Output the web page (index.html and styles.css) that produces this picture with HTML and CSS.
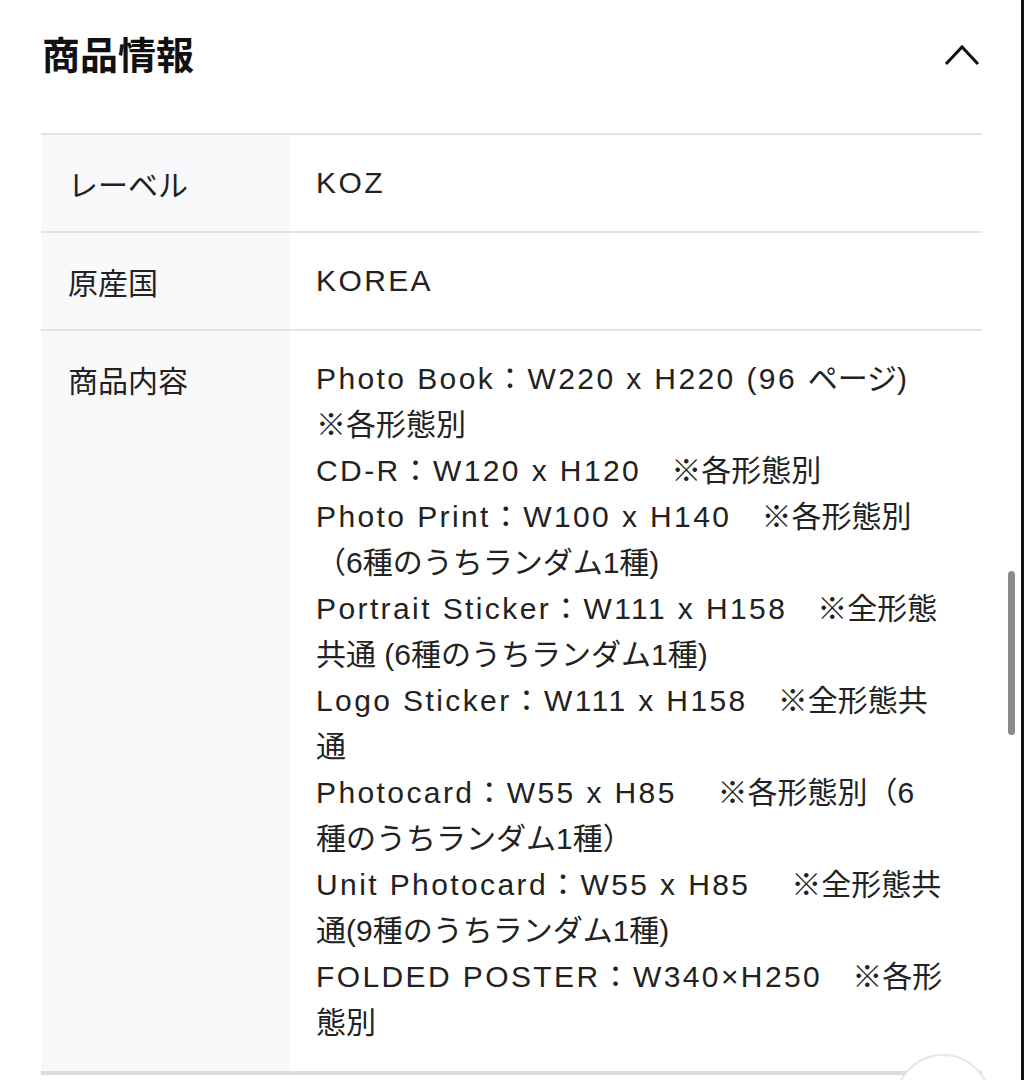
FILE: index.html
```html
<!DOCTYPE html>
<html lang="ja">
<head>
<meta charset="UTF-8">
<meta name="viewport" content="width=device-width, initial-scale=1.0">
<title>商品情報</title>
<link rel="stylesheet" href="styles.css">
</head>
<body>

<section class="info">
    <header class="info-head">
        <h2>商品情報</h2>
        <button class="toggle" aria-label="閉じる">
            <svg width="36" height="26" viewBox="0 0 36 26">
                <polyline points="2,24 18,7 34,24" fill="none" stroke="#111" stroke-width="3"/>
            </svg>
        </button>
    </header>

    <table class="spec">
        <tr>
            <th>レーベル</th>
            <td>KOZ</td>
        </tr>
        <tr>
            <th>原産国</th>
            <td>KOREA</td>
        </tr>
        <tr>
            <th>商品内容</th>
            <td>
                <p>Photo Book：W220 x H220 (96 <span class="ja">ページ</span>)<br><span class="ja">※各形態別</span></p>
                <p>CD-R：W120 x H120<span class="ja">　※各形態別</span></p>
                <p>Photo Print：W100 x H140<span class="ja">　※各形態別<br>（6種のうちランダム1種)</span></p>
                <p>Portrait Sticker：W111 x H158<span class="ja">　※全形態<br>共通 (6種のうちランダム1種)</span></p>
                <p>Logo Sticker：W111 x H158<span class="ja">　※全形態共<br>通</span></p>
                <p>Photocard：W55 x H85 <span class="ja">　※各形態別（6<br>種のうちランダム1種）</span></p>
                <p>Unit Photocard：W55 x H85 <span class="ja">　※全形態共<br>通(9種のうちランダム1種)</span></p>
                <p>FOLDED POSTER：W340×H250<span class="ja">　※各形<br>態別</span></p>
            </td>
        </tr>
        <tr class="next">
            <th></th>
            <td></td>
        </tr>
    </table>
</section>

<!-- barra de scroll y boton flotante -->
<div class="scrollbar"></div>
<div class="float-btn"></div>

</body>
</html>
```

FILE: styles.css
```css
:root {
    --text-color: #222;
    --label-bg: #f9f9fb;
    --line: #e4e4e8;
}

body {
    font-family: 'Liberation Sans', 'Noto Sans CJK JP', sans-serif;
    margin: 0;
    padding: 0;
    background-color: #fff;
    color: var(--text-color);
    height: 1080px;
    overflow: hidden;
    border-right: 3px solid #111;
    box-sizing: border-box;
}

.info {
    padding: 0 39px 0 41px;
}

.info-head {
    display: flex;
    justify-content: space-between;
    align-items: center;
    height: 106px;
    margin-bottom: 27px;
    padding-left: 1px;
}

.info-head h2 {
    margin: 0;
    font-family: 'Noto Sans CJK JP', sans-serif;
    font-size: 38px;
    font-weight: 700;
    color: #111;
    line-height: 50px;
}

.toggle {
    background: none;
    border: none;
    padding: 0;
    margin-right: 2px;
    display: flex;
    cursor: pointer;
}

.spec {
    width: 100%;
    border-collapse: collapse;
    border-top: 2px solid var(--line);
}

.spec tr {
    border-bottom: 2px solid var(--line);
}

.spec th {
    width: 249px;
    background-color: var(--label-bg);
    text-align: left;
    vertical-align: top;
    font-weight: 400;
    font-family: 'Noto Sans CJK JP', sans-serif;
    font-size: 30px;
    line-height: 46px;
    padding: 25px 0 25px 27px;
    box-sizing: border-box;
}

.spec td {
    vertical-align: top;
    font-size: 30px;
    line-height: 46px;
    letter-spacing: 2.4px;
    padding: 25px 10px 25px 26px;
}

.spec td p {
    margin: 0;
}

.spec td .ja {
    letter-spacing: 0;
}

.spec tr.next {
    border-top: 4px solid #dcdcdf;
    border-bottom: none;
}

.spec tr.next th {
    background: #fff;
    padding: 0;
    height: 40px;
}

.scrollbar {
    position: absolute;
    left: 1008px;
    top: 571px;
    width: 7px;
    height: 164px;
    border-radius: 4px;
    background-color: #8a8a8a;
}

.float-btn {
    position: absolute;
    left: 895px;
    top: 1054px;
    width: 96px;
    height: 96px;
    border-radius: 50%;
    background-color: #fff;
    border: 2px solid #e6e6e6;
    box-sizing: border-box;
}
```
